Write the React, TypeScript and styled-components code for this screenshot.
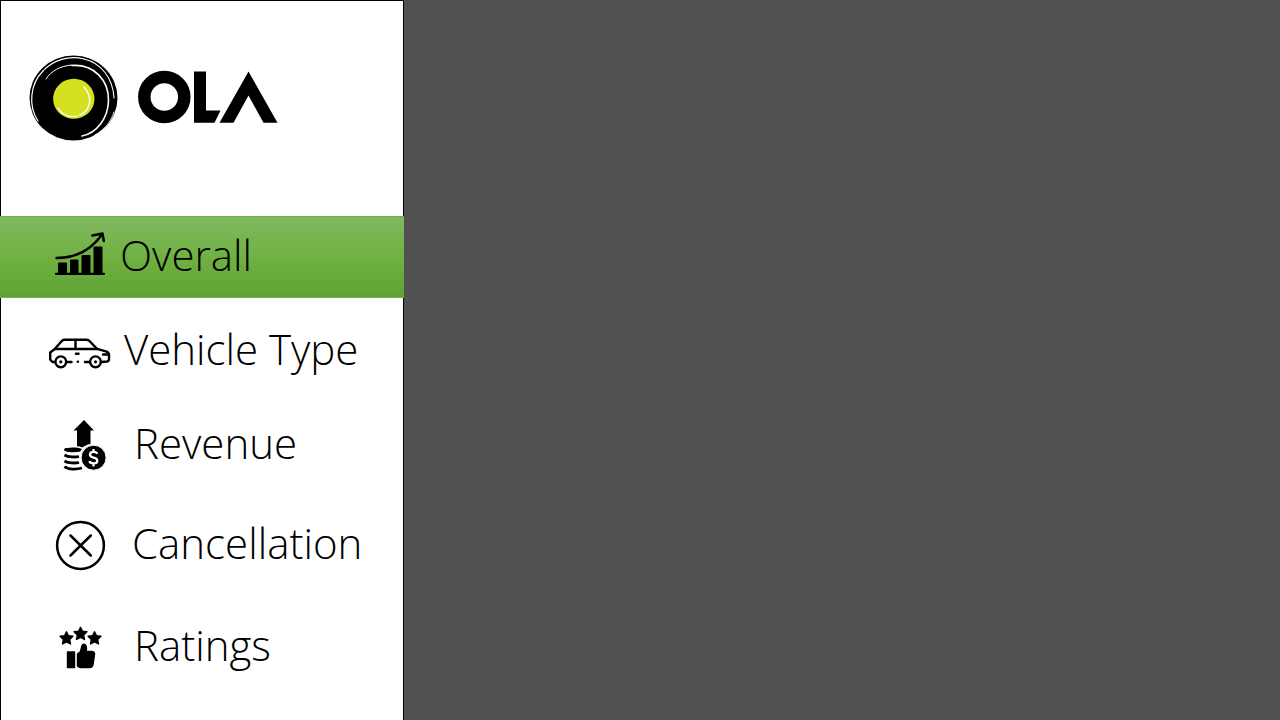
import React from "react";
import styled, { createGlobalStyle } from "styled-components";

const GlobalStyle = createGlobalStyle`
  *, *::before, *::after { box-sizing: border-box; }
  body { margin: 0; background: #515151; }
`;

const Layout = styled.div`
  display: flex;
  min-height: 100vh;
  font-family: "Open Sans", "Noto Sans", sans-serif;
  font-weight: 300;
  color: #000;
`;

const Sidebar = styled.aside`
  flex: none;
  width: 404px;
  background: #fff;
  border: solid #000;
  border-width: 1px 1px 0;
`;

const Content = styled.main`
  flex: 1;
  background: #515151;
`;

const Brand = styled.header`
  display: flex;
  align-items: flex-start;
  height: 215px;
  padding: 49px 0 0 23px;
`;

const Logo = styled.svg`
  display: block;
  width: 260px;
  height: 96px;
`;

const Menu = styled.nav`
  display: flex;
  flex-direction: column;
  margin: 0 -1px;
`;

const MenuLink = styled.a<{ $active?: boolean; $space: number; $gap: number }>`
  display: flex;
  align-items: center;
  gap: ${(p) => p.$gap}px;
  height: 82px;
  margin-top: ${(p) => p.$space}px;
  padding-left: 48px;
  color: inherit;
  text-decoration: none;
  ${(p) =>
    p.$active &&
    `background: linear-gradient(#81b861, #6fb242 50%, #61a235);
     border: solid #70ad47;
     border-width: 1px 0;`}
`;

const Icon = styled.svg`
  flex: none;
  width: 64px;
  height: 60px;
`;

const Label = styled.span`
  padding-bottom: 5px;
  font-size: 42px;
  line-height: 56px;
  white-space: nowrap;
`;

const STAR =
  "M0-6.2 2-2.3 6.4-1.7 3.2 1.5 4 6 0 3.9-4 6-3.2 1.5-6.4-1.7-2-2.3Z";

const OlaLogo = () => (
  <Logo viewBox="24 50 260 96" role="img" aria-label="Ola">
    <ellipse cx="73.500" cy="98" rx="44" ry="42.500" />
    <g fill="none" stroke="#fff" strokeLinecap="round">
      <path d="M38 121C28 106 30 84 43 71" strokeWidth="1.200" />
      <path d="M43 71C53 60 69 55 84 59" strokeWidth="1.100" />
      <path d="M46 79C51 71 60 66 72 65" strokeWidth="1" />
      <path d="M72 65.500C94 64 109 80 108.500 101C108 118 97 133 82 136" strokeWidth="1.600" />
      <path d="M84 59C101 63 113 78 114 98" strokeWidth="1.100" />
      <path d="M114 112C111 122 104 130 95 135" strokeWidth="0.900" />
    </g>
    <ellipse cx="73.800" cy="98.800" rx="20.700" ry="20" fill="#d5e021" />
    <g fill="none" stroke="#fff" strokeLinecap="round">
      <path d="M84 87C93 97 91 110 80 115" strokeWidth="1.400" />
      <path d="M58 108C62 115 70 118 77 116" strokeWidth="1.200" />
    </g>
    <circle cx="164.300" cy="97" r="20" fill="none" stroke="#000" strokeWidth="12.500" />
    <path d="M194 71.500H206V110.500H220.500L214.500 122.800H194ZM248.500 71.500 277.500 122.800H263.500L248.500 95.500 233.500 122.800H219.500Z" />
  </Logo>
);

const OverallIcon = () => (
  <Icon viewBox="48 227 64 60" aria-hidden="true">
    <path d="M56 273.800H104" stroke="#000" strokeWidth="2.200" strokeLinecap="round" />
    <path d="M58 263.500Q58 262.500 59 262.500H66Q67 262.500 67 263.500V273H58ZM70 260.500Q70 259.500 71 259.500H77.500Q78.500 259.500 78.500 260.500V273H70ZM81.500 256Q81.500 255 82.500 255H89.500Q90.500 255 90.500 256V273H81.500ZM93.500 247.500Q93.500 246.500 94.500 246.500H101.500Q102.500 246.500 102.500 247.500V273H93.500Z" />
    <path d="M56.500 258C76 258 91 250 102 234.500M92.500 235.500 102.500 233.500 103.800 241" fill="none" stroke="#000" strokeWidth="2.500" strokeLinecap="round" strokeLinejoin="round" />
  </Icon>
);

const VehicleIcon = () => (
  <Icon viewBox="48 321 64 60" aria-hidden="true">
    <g fill="none" stroke="#000" strokeWidth="2.400" strokeLinecap="round" strokeLinejoin="round">
      <path d="M55 362H52.500L50.200 359.500V352.500L54.500 349.300L62 340.800Q63 339.800 64.500 339.800H86Q88 339.800 89.500 341L97 348.800L106 351.300Q109 352.300 109 355V359.500Q109 361 107 361.500L101 362" />
      <path d="M55 349H97M75.500 340V349M66.500 362H71.500M85 362H90M103 354.500H108.500" />
      <path d="M76 353.800H78.500" />
      <circle cx="60.800" cy="361.800" r="5.400" />
      <circle cx="95.500" cy="361.800" r="5.400" />
    </g>
    <circle cx="60.800" cy="361.800" r="1.600" />
    <circle cx="95.500" cy="361.800" r="1.600" />
    <circle cx="77.800" cy="361.800" r="1.300" />
  </Icon>
);

const RevenueIcon = () => (
  <Icon viewBox="48 415 64 60" aria-hidden="true">
    <path d="M84 420 94 430.500H90.500V444C87 444.500 84 446 82.500 447.500Q79 446.300 77 446.200V430.500H73.500Z" />
    <path
      d="M64.500 449C68 451.500 76 451.200 80 450M64.500 455C68 457.500 76 457.200 79 456.500M64.500 461C68 463.500 76 463.200 79 462.500M64.500 466.500C68 469.800 77 469.500 82 468"
      fill="none"
      stroke="#000"
      strokeWidth="2.800"
    />
    <path d="M64.500 450C66 447 76 447 82 449L80 451.500H68Z" />
    <circle cx="93.600" cy="457.700" r="12.500" stroke="#fff" strokeWidth="1" />
    <path
      d="M97.300 453.800Q96.500 451.900 93.500 451.900Q90 451.900 90 454.600Q90 457 93.500 457.600Q97.300 458.200 97.300 460.700Q97.300 463.400 93.500 463.400Q90 463.400 89.500 461M93.500 449V452M93.500 463.500V466.500"
      fill="none"
      stroke="#fff"
      strokeWidth="2.300"
    />
  </Icon>
);

const CancelIcon = () => (
  <Icon viewBox="48 515 64 60" aria-hidden="true">
    <g fill="none" stroke="#000" strokeWidth="2.500" strokeLinecap="round">
      <circle cx="80.500" cy="545.500" r="23.400" />
      <path d="M70.500 535.500 90.800 555.500M90.800 535.500 70.500 555.500" />
    </g>
  </Icon>
);

const RatingsIcon = () => (
  <Icon viewBox="48 617 64 60" aria-hidden="true">
    <g stroke="#000" strokeWidth="1.400" strokeLinejoin="round">
      <path d={STAR} transform="translate(66.500 638)" />
      <path d={STAR} transform="translate(80.500 633.500)" />
      <path d={STAR} transform="translate(94.500 638)" />
      <path d="M67.500 652H74.500V667.500H67.500Z" />
      <path d="M77.500 654 80.500 651.500 82 645.500Q82.800 643.800 84.800 644.500Q87 645.500 86.200 651.500H92Q94.800 652 94.500 654.500L93 664.500Q92.300 667.500 89.500 667.500H81Q79 667.500 77.500 666Z" />
    </g>
  </Icon>
);

const items = [
  { label: "Overall", Glyph: OverallIcon, space: 0, gap: 8, active: true },
  { label: "Vehicle Type", Glyph: VehicleIcon, space: 12, gap: 12 },
  { label: "Revenue", Glyph: RevenueIcon, space: 12, gap: 22 },
  { label: "Cancellation", Glyph: CancelIcon, space: 18, gap: 20 },
  { label: "Ratings", Glyph: RatingsIcon, space: 20, gap: 22 },
];

export default function App() {
  return (
    <>
      <GlobalStyle />
      <Layout>
        <Sidebar>
          <Brand>
            <OlaLogo />
          </Brand>
          <Menu aria-label="Dashboard">
            {items.map(({ label, Glyph, space, gap, active }) => (
              <MenuLink
                key={label}
                href={`#${label.toLowerCase().replace(" ", "-")}`}
                aria-current={active ? "page" : undefined}
                $active={active}
                $space={space}
                $gap={gap}
              >
                <Glyph />
                <Label>{label}</Label>
              </MenuLink>
            ))}
          </Menu>
        </Sidebar>
        <Content />
      </Layout>
    </>
  );
}
